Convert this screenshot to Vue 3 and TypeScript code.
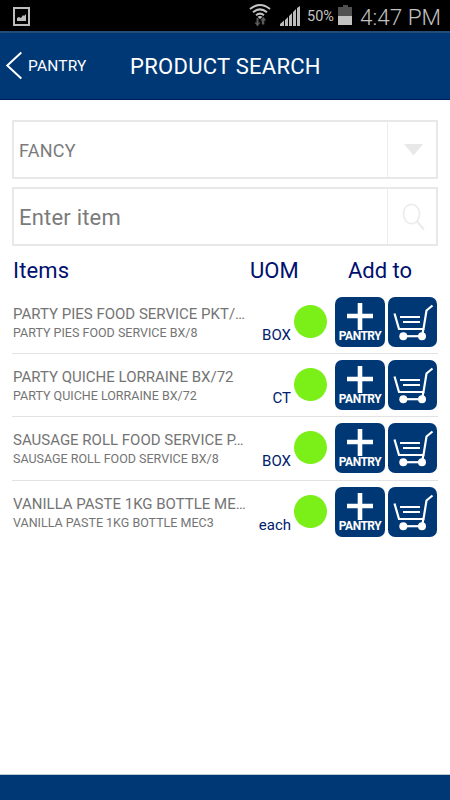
<script setup lang="ts">
interface Item {
  name: string
  detail: string
  uom: string
}

const items: Item[] = [
  { name: 'PARTY PIES FOOD SERVICE PKT/…', detail: 'PARTY PIES FOOD SERVICE BX/8', uom: 'BOX' },
  { name: 'PARTY QUICHE LORRAINE BX/72', detail: 'PARTY QUICHE LORRAINE BX/72', uom: 'CT' },
  { name: 'SAUSAGE ROLL FOOD SERVICE P…', detail: 'SAUSAGE ROLL FOOD SERVICE BX/8', uom: 'BOX' },
  { name: 'VANILLA PASTE 1KG BOTTLE ME…', detail: 'VANILLA PASTE 1KG BOTTLE MEC3', uom: 'each' },
]
</script>

<template>
  <div class="screen">
    <div class="status">
      <svg class="picture" width="17" height="19" viewBox="0 0 17 19">
        <rect x="1" y="1" width="15" height="17" fill="none" stroke="#bdbdbd" stroke-width="2" />
        <path d="M4 14v-3l2-1 2 1 2-3 1 1 2-2v7z" fill="#bdbdbd" />
      </svg>
      <div class="status-right">
        <svg class="wifi" width="22" height="24" viewBox="0 0 22 24">
          <g fill="none" stroke="#c4c4c4" stroke-width="2">
            <path d="M1 6Q11-2 21 6" />
            <path d="M4 9.200Q11 3.500 18 9.200" />
            <path d="M7 12.200Q11 9 15 12.200" />
          </g>
          <path d="M8.500 13.800Q11 12.200 13.500 13.800L11 16z" fill="#c4c4c4" />
          <path d="M7.500 15h2v4.500h2L8.500 23.500l-3-4h2zM12.800 21.500v-4h-1.500l3-3.800 3 3.800h-2v4z" fill="#5a5a5a" />
        </svg>
        <svg class="signal" width="20" height="20" viewBox="0 0 20 20">
          <path d="M0 20v-2l4-3.500V20zM5 20v-6l3-3v9zM9 20V10l3-3v13zM13 20V6l3-3v17zM17 20V2l3-2v20z" fill="#bdbdbd" />
        </svg>
        <span class="percent">50%</span>
        <svg class="battery" width="15" height="20" viewBox="0 0 15 20">
          <rect x="5" width="5" height="3" fill="#515151" />
          <rect y="2" width="14" height="9" fill="#515151" />
          <rect y="11" width="14" height="9" fill="#c2c2c2" />
        </svg>
        <span class="time">4:47 PM</span>
      </div>
    </div>

    <header class="header">
      <svg class="back" width="18" height="29" viewBox="0 0 18 29">
        <path d="M16.300 1.500L2.300 14.500l14 13" fill="none" stroke="#fff" stroke-width="2" />
      </svg>
      <span class="back-label">PANTRY</span>
      <h1 class="title">PRODUCT SEARCH</h1>
    </header>

    <main class="content">
      <div class="field category">
        <span class="field-text">FANCY</span>
        <div class="field-button">
          <svg width="20" height="12" viewBox="0 0 20 12"><path d="M0 0h19L9.500 11.500z" fill="#e8e8e8" /></svg>
        </div>
      </div>
      <div class="field search">
        <span class="field-text">Enter item</span>
        <div class="field-button">
          <svg width="24" height="28" viewBox="0 0 24 28" fill="none" stroke="#ebebeb" stroke-width="1.6">
            <ellipse cx="9.500" cy="11" rx="8" ry="9.800" />
            <path d="M15 18.500l7 8" stroke-width="2" />
          </svg>
        </div>
      </div>

      <div class="columns">
        <span class="col-items">Items</span>
        <span class="col-uom">UOM</span>
        <span class="col-add">Add to</span>
      </div>

      <div v-for="item in items" :key="item.name" class="row">
        <div class="info">
          <div class="name">{{ item.name }}</div>
          <div class="detail">{{ item.detail }}</div>
        </div>
        <span class="uom">{{ item.uom }}</span>
        <span class="dot"></span>
        <div class="tile pantry">
          <svg width="26" height="27" viewBox="0 0 26 27">
            <path d="M13 0v27M0 13h26" stroke="#fff" stroke-width="4.600" />
          </svg>
          <span class="tile-label">PANTRY</span>
        </div>
        <div class="tile cart">
          <svg width="49" height="50" viewBox="0 0 49 50" fill="none" stroke="#fff" stroke-width="2.200">
            <path d="M6.500 16.500l4.500 15.500h24.500L38.500 13.500l6-5" />
            <path d="M35.300 32l-1 7M12 20h20M15 25h17" />
            <path d="M15.300 39.200h18.500" />
            <circle cx="15.300" cy="39.200" r="4" fill="#fff" stroke="none" />
            <circle cx="34" cy="39.200" r="4" fill="#fff" stroke="none" />
          </svg>
        </div>
      </div>
    </main>
    <footer class="footer"></footer>
  </div>
</template>

<style>
body {
  margin: 0;
  background: #fff;
}
</style>

<style scoped>
.screen {
  display: flex;
  flex-direction: column;
  width: 450px;
  height: 800px;
  overflow: hidden;
  background: #fff;
  font-family: Roboto, sans-serif;
  white-space: nowrap;
}
.status {
  display: flex;
  justify-content: space-between;
  box-sizing: border-box;
  height: 31px;
  padding: 0 10px 0 13px;
  background: #000;
  color: #c2c2c2;
}
.picture {
  margin-top: 7px;
}
.status-right {
  display: flex;
}
.wifi {
  margin: 3px 9px 0 0;
}
.signal {
  margin: 6px 7px 0 0;
}
.percent {
  width: 28px;
  margin-right: 3px;
  font-size: 14.500px;
  line-height: 34px;
}
.battery {
  margin: 5px 7px 0 0;
}
.time {
  width: 80px;
  font-size: 22.500px;
  font-weight: 300;
  line-height: 35px;
}
.header {
  display: flex;
  box-sizing: border-box;
  height: 69px;
  padding-left: 5px;
  border-top: 2px solid #254c78;
  border-bottom: 1px solid #002258;
  background: #003876;
  color: #fff;
}
.back {
  margin-top: 18px;
}
.back-label {
  width: 101px;
  margin-left: 5px;
  font-size: 15.500px;
  letter-spacing: 0.200px;
  line-height: 66px;
}
.title {
  margin: 0 0 0 1px;
  font-size: 22px;
  font-weight: 400;
  letter-spacing: 0.280px;
  line-height: 68px;
}
.content {
  flex: 1;
  padding: 20px 12px 0;
}
.field {
  display: flex;
  box-sizing: border-box;
  height: 59px;
  border: 2px solid #e8e8e8;
  color: #7b7b7b;
}
.category {
  font-size: 18px;
  letter-spacing: 0.250px;
}
.search {
  margin-top: 8px;
  font-size: 22px;
  letter-spacing: 0.200px;
}
.field-text {
  flex: 1;
  padding-left: 5px;
  line-height: 57px;
}
.search .field-text {
  line-height: 58px;
}
.field-button {
  display: flex;
  align-items: center;
  justify-content: center;
  width: 48px;
  border-left: 1px solid #ededed;
}
.field-button svg {
  margin-left: 3px;
}
.columns {
  display: flex;
  height: 44.500px;
  color: #00106e;
  font-size: 22px;
  line-height: 50px;
}
.col-items {
  width: 237px;
  padding-left: 1px;
  letter-spacing: 0.150px;
}
.col-uom {
  width: 98px;
}
.row {
  display: flex;
  box-sizing: border-box;
  height: 63.400px;
  padding-top: 6px;
  border-bottom: 1px solid #e2e2e2;
}
.row:last-child {
  border-bottom: 0;
}
.info {
  width: 232px;
  padding: 7px 0 0 1px;
  color: #747474;
}
.name {
  font-size: 15px;
  line-height: 20px;
}
.detail {
  font-size: 12.500px;
  line-height: 17px;
}
.uom {
  width: 46px;
  color: #00206c;
  font-size: 15px;
  line-height: 76px;
  text-align: right;
}
.dot {
  width: 33px;
  height: 33px;
  margin: 8px 8px 0 3px;
  border-radius: 50%;
  background: #7aef18;
}
.tile {
  width: 50px;
  height: 50px;
  border-radius: 7px;
  background: #003876;
  color: #fff;
}
.pantry {
  display: flex;
  flex-direction: column;
  align-items: center;
  margin-right: 3px;
}
.pantry svg {
  margin-top: 6px;
}
.tile-label {
  font-size: 12px;
  font-weight: 700;
  letter-spacing: -0.500px;
  line-height: 13px;
}
.cart {
  width: 49px;
}
.cart svg {
  display: block;
}
.footer {
  height: 25px;
  border-top: 1px solid #b9cbd6;
  background: #003876;
}
</style>
